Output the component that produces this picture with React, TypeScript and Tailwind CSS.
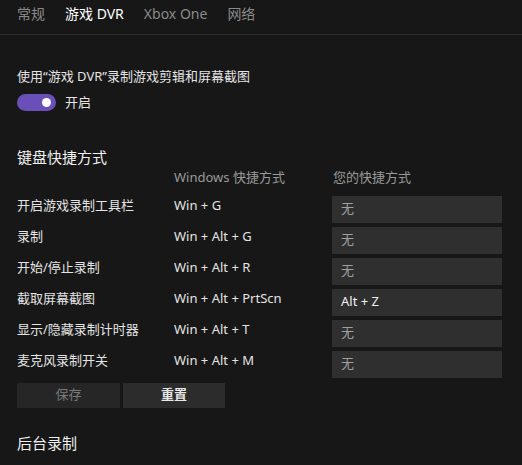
import React from "react";

const rows = [
  { label: "开启游戏录制工具栏", win: "Win + G", mine: "" },
  { label: "录制", win: "Win + Alt + G", mine: "" },
  { label: "开始/停止录制", win: "Win + Alt + R", mine: "" },
  { label: "截取屏幕截图", win: "Win + Alt + PrtScn", mine: "Alt + Z" },
  { label: "显示/隐藏录制计时器", win: "Win + Alt + T", mine: "" },
  { label: "麦克风录制开关", win: "Win + Alt + M", mine: "" },
];

const tabs = ["常规", "游戏 DVR", "Xbox One", "网络"];

export default function App() {
  return (
    <div
      className="w-[522px] h-[465px] overflow-hidden bg-[#171717] text-[#e4e4e4]"
      style={{ fontFamily: '"Noto Sans", "Noto Sans CJK SC", sans-serif' }}
    >
      {/* TABS */}
      <div className="flex h-[35px] items-center gap-[20px] border-b border-[#2c2c2c] px-[17px] pb-[7px] text-[14px]">
        {tabs.map((t, i) => (
          <span key={t} className={i === 1 ? "text-white" : "text-[#8a8a8a]"}>
            {t}
          </span>
        ))}
      </div>

      <div className="px-[17px]">
        {/* DVR TOGGLE */}
        <p className="mt-[32px] text-[13px] leading-[18px]">使用“游戏 DVR”录制游戏剪辑和屏幕截图</p>
        <div className="mt-[8px] flex items-center gap-[9px]">
          <div className="flex h-[17px] w-[39px] items-center justify-end rounded-full bg-[#6a4fb8] pr-[5px]">
            <div className="h-[9px] w-[9px] rounded-full bg-white" />
          </div>
          <span className="text-[13px]">开启</span>
        </div>

        {/* SHORTCUTS */}
        <h2 className="mt-[34px] text-[15px] leading-[20px] text-[#f0f0f0]">键盘快捷方式</h2>
        <div className="mt-[1px] grid grid-cols-[157px_158px_170px] text-[13px]">
          <div />
          <div className="leading-[18px] text-[#9a9a9a]">Windows 快捷方式</div>
          <div className="pl-[1px] leading-[18px] text-[#9a9a9a]">您的快捷方式</div>
        </div>
        <div className="mt-[10px] flex flex-col gap-[4px]">
          {rows.map((r) => (
            <div key={r.label} className="grid grid-cols-[157px_158px_170px] text-[13px]">
              <div className="leading-[18px]">{r.label}</div>
              <div className="leading-[18px]">{r.win}</div>
              <div
                className={`flex h-[27px] items-center bg-[#2f2f2f] pl-[9px] ${
                  r.mine ? "text-[#f0f0f0]" : "text-[#a0a0a0]"
                }`}
              >
                {r.mine || "无"}
              </div>
            </div>
          ))}
        </div>

        {/* ACTIONS */}
        <div className="mt-[5px] flex gap-[3px] text-[13px]">
          <button className="h-[25px] w-[103px] bg-[#262626] text-[#7a7a7a]">保存</button>
          <button className="h-[25px] w-[102px] bg-[#2c2c2c] font-bold text-[#e8e8e8]">重置</button>
        </div>

        <h2 className="mt-[25px] text-[15px] leading-[20px] text-[#f0f0f0]">后台录制</h2>
      </div>
    </div>
  );
}
